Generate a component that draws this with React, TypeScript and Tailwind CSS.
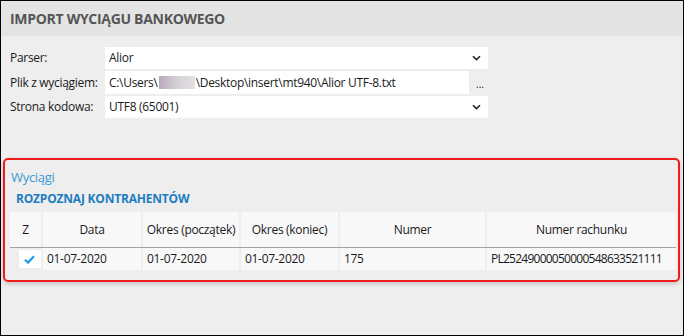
import React from "react";

const font = { fontFamily: '"Open Sans", "Noto Sans", sans-serif' };

function Chevron() {
  return (
    <svg width="9" height="6" viewBox="0 0 9 6" className="shrink-0">
      <path d="M1 1.2 L4.5 4.6 L8 1.2" fill="none" stroke="#222" strokeWidth="1.6" />
    </svg>
  );
}

export default function App() {
  const cols = [
    { label: "Z", w: "w-[31px]" },
    { label: "Data", w: "w-[98px]" },
    { label: "Okres (początek)", w: "w-[96px]" },
    { label: "Okres (koniec)", w: "w-[97px]" },
    { label: "Numer", w: "w-[145px]" },
    { label: "Numer rachunku", w: "flex-1" },
  ];
  const row = ["01-07-2020", "01-07-2020", "01-07-2020", "175", "PL25249000050000548633521111"];
  return (
    <div
      style={font}
      className="w-[684px] h-[336px] border border-black bg-[#eeeeee] flex flex-col text-[12px] text-[#1a1a1a] overflow-hidden"
    >
      <div className="h-[35px] shrink-0 bg-[#e4e4e4] flex items-center pl-[9px]">
        <span className="text-[14px] font-bold text-[#555] tracking-[-0.3px]">IMPORT WYCIĄGU BANKOWEGO</span>
      </div>

      <div className="pt-[11px] pl-[9px] flex flex-col gap-[2px]">
        <div className="flex items-center h-[22px]">
          <span className="w-[95px] tracking-[-0.3px]">Parser:</span>
          <div className="w-[383px] h-[22px] bg-white flex items-center justify-between pl-[4px] pr-[7px]">
            <span className="tracking-[-0.3px]">Alior</span>
            <Chevron />
          </div>
        </div>
        <div className="flex items-center h-[23px]">
          <span className="w-[95px] tracking-[-0.3px]">Plik z wyciągiem:</span>
          <div className="w-[364px] h-[23px] bg-white flex items-center pl-[4px] tracking-[-0.3px]">
            <span>C:\Users\</span>
            <span className="inline-block w-[36px] h-[13px] bg-gradient-to-r from-[#b9a9bb] via-[#d6d0d6] to-[#e2e2e2] mx-[1px]" />
            <span>\Desktop\insert\mt940\Alior UTF-8.txt</span>
          </div>
          <span className="ml-[7px] text-[10px] leading-none pt-[2px]">...</span>
        </div>
        <div className="flex items-center h-[22px]">
          <span className="w-[95px] tracking-[-0.3px]">Strona kodowa:</span>
          <div className="w-[383px] h-[22px] bg-white flex items-center justify-between pl-[4px] pr-[7px]">
            <span className="tracking-[-0.3px]">UTF8 (65001)</span>
            <Chevron />
          </div>
        </div>
      </div>

      <div className="mt-[40px] ml-[2px] mr-[3px] h-[124px] border-2 border-[#ee1c1c] rounded-[5px] shadow-[0_2px_5px_rgba(0,0,0,0.18)] flex flex-col pl-[4px] pr-[2px]">
        <div className="pt-[8px] pl-[2px] text-[13px] text-[#3a9ad6] tracking-[-0.3px] leading-[18px]">Wyciągi</div>
        <div className="pt-[5px] pl-[7px] text-[12px] font-bold text-[#1d7dc2] tracking-[-0.2px] leading-[16px]">ROZPOZNAJ KONTRAHENTÓW</div>
        <div className="mt-[5px] ml-[1px] flex flex-col">
          <div className="flex gap-[2px] h-[36px] border-b border-[#a3a3a3]">
            {cols.map((c) => (
              <div key={c.label} className={`${c.w} bg-[#f8f8f8] flex items-center justify-center tracking-[-0.3px]`}>
                {c.label}
              </div>
            ))}
          </div>
          <div className="flex gap-[2px] h-[22px]">
            <div className="w-[31px] flex items-center justify-end">
              <div className="w-[22px] h-[18px] bg-white flex items-center pl-[5px]">
                <svg width="11" height="9" viewBox="0 0 11 9">
                  <path d="M1 4.8 L4 7.6 L10 1.2" fill="none" stroke="#1e9be0" strokeWidth="2.2" />
                </svg>
              </div>
            </div>
            {row.map((v, i) => (
              <div
                key={i}
                className={`${cols[i + 1].w} bg-[#f8f8f8] flex items-center pl-[4px] ${i === 4 ? "tracking-[-0.75px]" : "tracking-[-0.3px]"}`}
              >
                {v}
              </div>
            ))}
          </div>
        </div>
      </div>
    </div>
  );
}
